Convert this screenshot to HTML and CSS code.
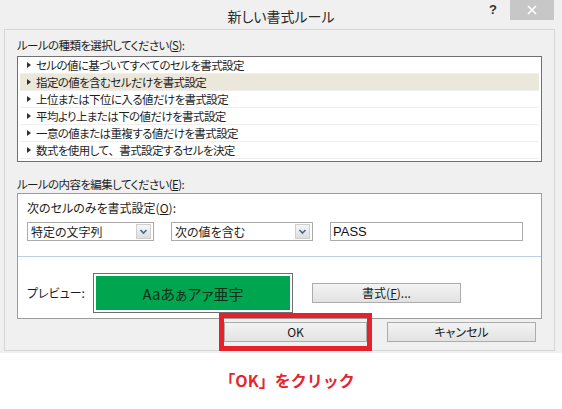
FILE: index.html
```html
<!DOCTYPE html>
<html lang="ja">
<head>
<meta charset="utf-8">
<title>新しい書式ルール</title>
<link rel="stylesheet" href="styles.css">
</head>
<body>
<div class="dialog">
  <div class="titlebar">
    <div></div>
    <div class="title">新しい書式ルール</div>
    <div class="winctl">
      <span class="help">?</span>
      <span class="close"><svg width="10" height="10" viewBox="0 0 10 10"><path d="M1 1 L9 9 M9 1 L1 9" stroke="#ffffff" stroke-width="1.6" fill="none"/></svg></span>
    </div>
  </div>
  <div class="client">
    <div class="label">ルールの種類を選択してください(<u>S</u>):</div>
    <ul class="list">
      <li><span class="tri"></span>セルの値に基づいてすべてのセルを書式設定</li>
      <li class="sel"><span class="tri"></span>指定の値を含むセルだけを書式設定</li>
      <li><span class="tri"></span>上位または下位に入る値だけを書式設定</li>
      <li><span class="tri"></span>平均より上または下の値だけを書式設定</li>
      <li><span class="tri"></span>一意の値または重複する値だけを書式設定</li>
      <li><span class="tri"></span>数式を使用して<span class="fw">、</span>書式設定するセルを決定</li>
    </ul>
    <div class="label label2">ルールの内容を編集してください(<u>E</u>):</div>
    <div class="panel">
      <div class="plabel">次のセルのみを書式設定(<u>O</u>):</div>
      <div class="crow">
        <div class="combo c1"><span>特定の文字列</span><span class="arrow"><svg width="13" height="13" viewBox="0 0 13 13"><path d="M3.5 5 L6.5 8 L9.5 5" stroke="#4a6790" stroke-width="1.6" fill="none"/></svg></span></div>
        <div class="combo c2"><span>次の値を含む</span><span class="arrow"><svg width="13" height="13" viewBox="0 0 13 13"><path d="M3.5 5 L6.5 8 L9.5 5" stroke="#4a6790" stroke-width="1.6" fill="none"/></svg></span></div>
        <div class="input">PASS</div>
      </div>
      <div class="sep"></div>
      <div class="prow">
        <div class="pvlabel">プレビュー:</div>
        <div class="preview"><div class="pvinner">Aaあぁアァ亜宇</div></div>
        <div class="btn fmt">書式(<u>F</u>)...</div>
      </div>
    </div>
    <div class="buttons">
      <div class="okwrap"><div class="btn ok">OK</div><div class="redbox"></div></div>
      <div class="btn cancel">キャンセル</div>
    </div>
  </div>
</div>
<div class="caption">「OK」をクリック</div>
</body>
</html>
```
FILE: styles.css
```css
body {
  margin: 0;
  background: #ffffff;
  font-family: "Noto Sans CJK JP", "Liberation Sans", sans-serif;
  font-feature-settings: "palt";
  color: #1e1e1e;
}
.dialog {
  width: 562px;
  height: 353px;
  background: #f0f0f0;
}
.titlebar {
  height: 29px;
  display: grid;
  grid-template-columns: 1fr auto 1fr;
}
.title {
  font-size: 14px;
  line-height: 20px;
  padding-top: 6px;
  color: #2a2a2a;
}
.winctl {
  display: flex;
  justify-content: flex-end;
  align-items: flex-start;
  padding-right: 8px;
}
.help {
  font: bold 13px "Liberation Sans", sans-serif;
  line-height: 16px;
  margin-top: 2px;
  margin-right: 13px;
  color: #333;
}
.close {
  width: 44px;
  height: 20px;
  background: #c7c7c7;
  display: flex;
  align-items: center;
  justify-content: center;
}
.client {
  margin-left: 4px;
  width: 551px;
  height: 322px;
  box-sizing: border-box;
  border: 1px solid #d6d6d6;
  padding: 8px 12px 0;
}
.label {
  font-size: 11.5px;
  letter-spacing: -0.6px;
  line-height: 14px;
}
.label2 {
  margin-top: 15px;
}
u {
  text-decoration: underline;
  text-underline-offset: 1px;
}
.list {
  margin: 4px 0 0;
  padding: 0 0 2px;
  list-style: none;
  border: 1px solid #707070;
  background: #ffffff;
  height: 106px;
  box-sizing: border-box;
}
.list li {
  height: 17px;
  box-sizing: border-box;
  border-bottom: 1px solid #efefef;
  margin: 0 2px;
  padding-left: 7px;
  display: flex;
  align-items: center;
  font-size: 11.5px;
  letter-spacing: -0.6px;
  line-height: 16px;
  white-space: nowrap;
}
.list li.sel {
  background: #ebe7da;
}
.fw {
  font-feature-settings: normal;
}
.tri {
  width: 0;
  height: 0;
  border-left: 4px solid #303030;
  border-top: 3px solid transparent;
  border-bottom: 3px solid transparent;
  margin-right: 5px;
}
.panel {
  margin-top: 2px;
  height: 126px;
  box-sizing: border-box;
  border: 1px solid #9c9c9c;
  background: #ffffff;
  padding-top: 7px;
}
.plabel {
  font-size: 12px;
  line-height: 14px;
  padding-left: 9px;
}
.crow {
  display: flex;
  margin-top: 7px;
  padding-left: 9px;
  height: 19px;
}
.combo {
  height: 19px;
  box-sizing: border-box;
  border: 1px solid #ababab;
  display: flex;
  align-items: center;
  justify-content: space-between;
  padding: 0 2px 0 3px;
  font-size: 12px;
  line-height: 16px;
}
.c1 { width: 127px; }
.c2 { width: 142px; margin-left: 17px; }
.arrow {
  width: 15px;
  height: 15px;
  box-sizing: border-box;
  border: 1px solid #cfcfcf;
  background: linear-gradient(#f6f6f6, #dedede);
  display: flex;
  align-items: center;
  justify-content: center;
}
.input {
  width: 193px;
  height: 19px;
  box-sizing: border-box;
  margin-left: 17px;
  border: 1px solid #ababab;
  padding-left: 2px;
  font: 13px "Liberation Sans", sans-serif;
  line-height: 17px;
  color: #111;
}
.sep {
  margin-top: 15px;
  height: 1px;
  background: #b9d0e2;
}
.prow {
  display: flex;
  align-items: center;
  margin-top: 16px;
  padding-left: 9px;
}
.pvlabel {
  width: 66px;
  font-size: 12px;
  line-height: 14px;
}
.preview {
  width: 200px;
  height: 40px;
  box-sizing: border-box;
  border: 1px solid #6e6e6e;
  padding: 2px;
  background: #ffffff;
}
.pvinner {
  height: 100%;
  background: #00a64f;
  display: flex;
  align-items: center;
  justify-content: center;
  font-size: 15px;
  color: #10301a;
}
.btn {
  box-sizing: border-box;
  border: 1px solid #acacac;
  background: linear-gradient(#f3f3f3, #e2e2e2);
  display: flex;
  align-items: center;
  justify-content: center;
  font-size: 12px;
  line-height: 14px;
  color: #1a1a1a;
}
.fmt {
  margin-left: 19px;
  width: 149px;
  height: 20px;
}
.buttons {
  display: flex;
  justify-content: flex-end;
  gap: 20px;
  margin-top: 3px;
  padding-right: 6px;
}
.okwrap {
  position: relative;
}
.ok {
  width: 143px;
  height: 20px;
  font-size: 12px;
}
.cancel {
  width: 149px;
  height: 20px;
}
.redbox {
  position: absolute;
  left: -5px;
  right: -5px;
  top: -9px;
  bottom: -9px;
  border: 5px solid #e3222b;
}
.caption {
  text-align: center;
  font-weight: bold;
  font-size: 16px;
  font-feature-settings: normal;
  line-height: 24px;
  color: #e3262b;
  margin-top: 15px;
  padding-left: 12px;
}
```
